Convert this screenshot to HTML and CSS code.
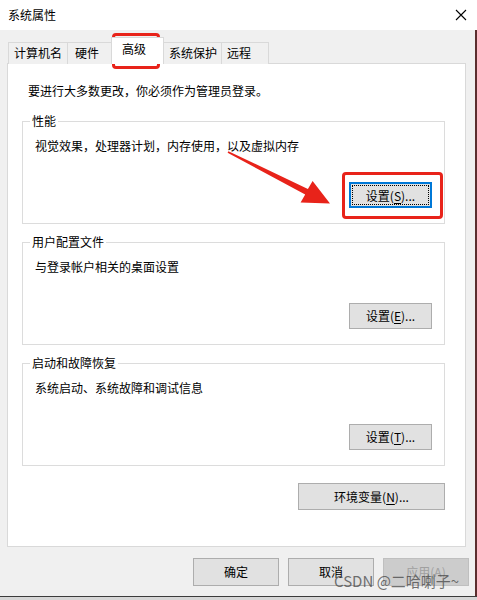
FILE: index.html
```html
<!DOCTYPE html>
<html lang="zh">
<head>
<meta charset="utf-8">
<title>系统属性</title>
<link rel="stylesheet" href="styles.css">
</head>
<body>
<div class="window">
  <div class="titlebar">
    <span class="title">系统属性</span>
    <svg class="close" width="12" height="12" viewBox="0 0 12 12"><path d="M1 1 L11 11 M11 1 L1 11" stroke="#000" stroke-width="1.1" fill="none"/></svg>
  </div>
  <div class="client">
    <div class="tabs">
      <div class="tab t1">计算机名</div>
      <div class="tab t2">硬件</div>
      <div class="tab t3 selected">高级</div>
      <div class="tab t4">系统保护</div>
      <div class="tab t5">远程</div>
    </div>
    <div class="panel">
      <p class="intro">要进行大多数更改，你必须作为管理员登录。</p>
      <div class="group first">
        <span class="legend">性能</span>
        <p class="desc">视觉效果，处理器计划，内存使用，以及虚拟内存</p>
        <div class="btnrow"><button class="btn focused">设置(<u>S</u>)...</button></div>
      </div>
      <div class="group">
        <span class="legend">用户配置文件</span>
        <p class="desc">与登录帐户相关的桌面设置</p>
        <div class="btnrow"><button class="btn">设置(<u>E</u>)...</button></div>
      </div>
      <div class="group">
        <span class="legend">启动和故障恢复</span>
        <p class="desc">系统启动、系统故障和调试信息</p>
        <div class="btnrow"><button class="btn">设置(<u>T</u>)...</button></div>
      </div>
      <div class="envrow"><button class="btn wide">环境变量(<u>N</u>)...</button></div>
    </div>
    <div class="footer">
      <button class="btn foot">确定</button>
      <button class="btn foot">取消</button>
      <button class="btn foot disabled">应用(A)</button>
    </div>
  </div>
  <div class="taskbar"></div>
</div>
<div class="mark mark-tab"></div>
<div class="mark mark-btn"></div>
<svg class="arrow" width="477" height="600" viewBox="0 0 477 600">
  <polygon points="228.4,151.2 307.9,189.0 312.6,180.9 330,203.5 300.6,202.5 305.2,194.4 227.6,152.8" fill="#e8231a"/>
</svg>
<div class="watermark">CSDN @二哈喇子~</div>
</body>
</html>
```
FILE: styles.css
```css
* { box-sizing: border-box; }
html, body { margin: 0; padding: 0; }
body {
  width: 477px;
  height: 600px;
  overflow: hidden;
  font-family: "Noto Sans CJK SC", "Microsoft YaHei", sans-serif;
  font-size: 12px;
  color: #000;
  background: #f0f0f0;
  position: relative;
}
.window {
  display: flex;
  flex-direction: column;
  height: 600px;
}
.titlebar {
  height: 30px;
  background: #fff;
  display: flex;
  align-items: center;
  justify-content: space-between;
  padding: 0 10px 0 8px;
  flex: none;
}
.title { font-size: 12px; line-height: 16px; }
.close { display: block; }
.client {
  flex: 1;
  background: #f0f0f0;
  border-right: 2px solid #5b2e2e;
  padding-top: 7px;
}
.tabs {
  display: flex;
  align-items: flex-end;
  padding-left: 8px;
  height: 27px;
  margin-bottom: -1px;
  position: relative;
  z-index: 1;
}
.tab {
  height: 22px;
  line-height: 20px;
  padding: 0 0 0 5px;
  border: 1px solid #d9d9d9;
  border-bottom: none;
  background: #f0f0f0;
  flex: none;
}
.t1 { width: 60px; }
.t2 { width: 47px; padding-left: 7px; margin-left: -1px; }
.t4 { width: 59px; margin-left: -1px; }
.t5 { width: 48px; margin-left: -1px; }
.tab.selected {
  width: 53px;
  height: 27px;
  line-height: 22px;
  background: #fff;
  padding-left: 10px;
  margin: 0 0 0 -3px;
  position: relative;
  z-index: 2;
}
.panel {
  margin: 0 9px 0 7px;
  background: #fff;
  border: 1px solid #d9d9d9;
  padding: 18px 20px 36px 14px;
}
.intro {
  margin: 0 0 0 6px;
  line-height: 17px;
}
.group {
  border: 1px solid #dcdcdc;
  padding: 0 12px 15px 12px;
  margin-top: 18px;
}
.group.first { margin-top: 22px; }
.legend {
  display: block;
  width: max-content;
  margin: -9px 0 0 -5px;
  padding: 0 2px;
  background: #fff;
  line-height: 16px;
}
.desc {
  margin: 8px 0 0 0;
  line-height: 17px;
}
.btnrow {
  display: flex;
  justify-content: flex-end;
  margin-top: 28px;
}
.btn {
  font-family: inherit;
  font-size: 12px;
  color: #000;
  width: 83px;
  height: 26px;
  background: #e1e1e1;
  border: 1px solid #adadad;
  padding: 0;
  margin: 0;
  line-height: 24px;
  border-radius: 0;
}
.btn u { text-underline-offset: 2px; }
.btn.focused {
  border: 2px solid #0078d7;
  outline: 1px dotted #000;
  outline-offset: -4px;
}
.envrow {
  display: flex;
  justify-content: flex-end;
  margin-top: 17px;
}
.btn.wide { width: 147px; height: 27px; }
.footer {
  display: flex;
  justify-content: flex-end;
  gap: 9px;
  padding: 11px 6px 0 0;
}
.btn.foot { width: 86px; height: 28px; }
.btn.disabled {
  color: #a0a0a0;
  background: #cccccc;
  border-color: #bfbfbf;
}
.taskbar {
  height: 4px;
  background: #d6d6d6;
  border-top: 1px solid #3c3c3c;
  flex: none;
}
.mark {
  position: absolute;
  border: 3px solid #e8231a;
  border-radius: 4px;
  pointer-events: none;
}
.mark-tab { left: 112px; top: 33px; width: 48px; height: 36px; }
.mark-btn { left: 342px; top: 172px; width: 101px; height: 47px; }
.arrow { position: absolute; left: 0; top: 0; pointer-events: none; }
.watermark {
  position: absolute;
  left: 334px;
  top: 572px;
  font-family: "Noto Sans CJK SC", sans-serif;
  font-size: 15px;
  line-height: 18px;
  color: rgba(70, 70, 70, 0.75);
  letter-spacing: 0;
}
```
